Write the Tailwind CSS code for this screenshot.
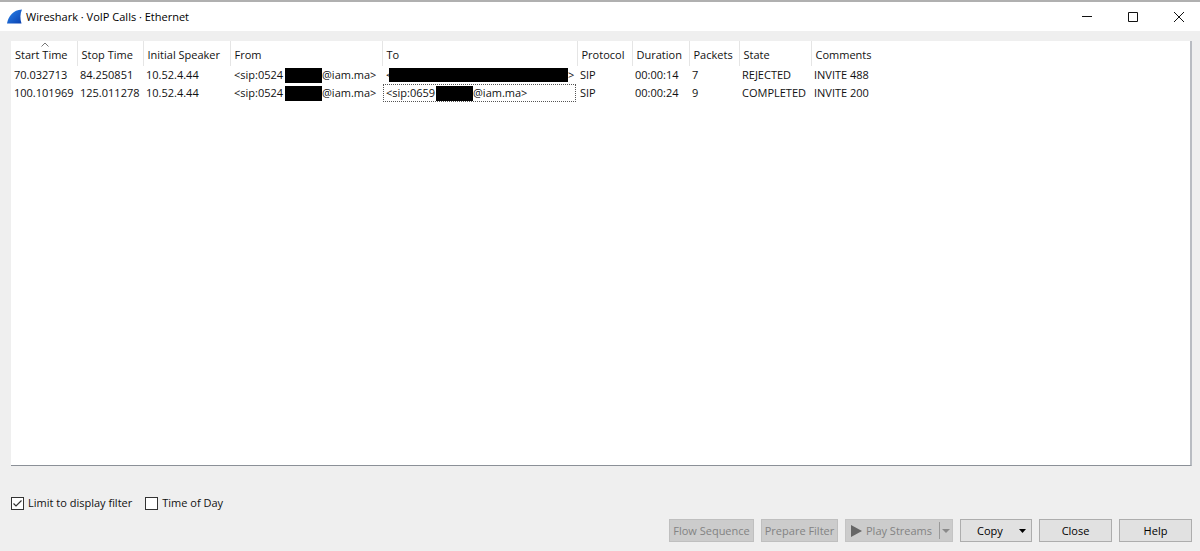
<!DOCTYPE html>
<html lang="en">
<head>
  <meta charset="UTF-8" />
  <meta name="viewport" content="width=device-width, initial-scale=1.0"/>
  <title>Wireshark · VoIP Calls · Ethernet</title>
  <script src="https://cdn.jsdelivr.net/npm/@tailwindcss/browser@4"></script>
</head>
<body class="min-h-screen flex flex-col bg-[#efefef] text-[#111] text-[11px] leading-[18px] font-['Open_Sans','Noto_Sans',sans-serif]">

  <!-- Title bar -->
  <header class="flex items-center h-[31px] pl-[7px] pr-4 bg-white border-t-2 border-[#b0b0b0] text-black">
    <svg class="w-[15px] h-[15px] mr-1" viewBox="0 0 15 15">
      <defs>
        <linearGradient id="fin" x1="0" y1="0" x2="1" y2="1">
          <stop offset="0" stop-color="#2a86ee"/>
          <stop offset="1" stop-color="#0a3fae"/>
        </linearGradient>
      </defs>
      <path d="M0 14.500C1.500 7 6 1 15 0.500C13 4.500 13 10 14.500 14.500Z" fill="url(#fin)"/>
    </svg>
    <h1>Wireshark · VoIP Calls · Ethernet</h1>
    <div class="ml-auto flex gap-9">
      <button aria-label="Minimize"><svg class="w-[10px] h-[10px]" viewBox="0 0 10 10" stroke="#111" fill="none"><path d="M0 4.500H10"/></svg></button>
      <button aria-label="Maximize"><svg class="w-[10px] h-[10px]" viewBox="0 0 10 10" stroke="#111" fill="none"><path d="M.5 .5H9.500V9.500H.5Z"/></svg></button>
      <button aria-label="Close window"><svg class="w-[10px] h-[10px]" viewBox="0 0 10 10" stroke="#111" fill="none"><path d="M0 0L10 10M10 0L0 10"/></svg></button>
    </div>
  </header>

  <main class="flex-1 flex flex-col pl-[11px] pt-[10px] pb-[9px] pr-[8px]">

    <!-- Call list -->
    <div class="flex-1 bg-white border-r-2 border-b border-r-[#b9bcc2] border-b-[#8b9097]">
      <table class="w-full table-fixed text-left whitespace-nowrap">
        <colgroup>
          <col class="w-[66px]"><col class="w-[66px]"><col class="w-[87px]"><col class="w-[152px]"><col class="w-[195px]">
          <col class="w-[55px]"><col class="w-[57px]"><col class="w-[50px]"><col class="w-[72px]"><col>
        </colgroup>
        <thead>
          <tr class="h-[25px] [&>th]:font-normal [&>th]:pl-1 [&>th]:pt-[2px] [&>th]:border-r [&>th]:border-[#e5e5e5] [&>th:last-child]:border-0">
            <th class="relative">Start Time
              <svg class="absolute top-[1px] left-[30px] w-[8px] h-[5px]" viewBox="0 0 8 5" fill="none" stroke="#777"><path d="M.5 4.500L4 1L7.500 4.500"/></svg>
            </th>
            <th>Stop Time</th>
            <th>Initial Speaker</th>
            <th>From</th>
            <th>To</th>
            <th>Protocol</th>
            <th>Duration</th>
            <th>Packets</th>
            <th>State</th>
            <th>Comments</th>
          </tr>
        </thead>
        <tbody class="[&_td]:pl-[3px]">
          <tr class="h-[18px]">
            <td>70.032713</td>
            <td>84.250851</td>
            <td>10.52.4.44</td>
            <td><div class="flex items-center pl-[1px]"><span class="w-[51px]">&lt;sip:0524</span><span class="w-[37px] h-[15px] bg-black"></span>@iam.ma&gt;</div></td>
            <td><div class="flex items-center pl-[1px]"><span class="w-[3px]">&lt;</span><span class="relative w-[179px] h-[14px] bg-black"></span><span class="w-[6px]">&gt;</span></div></td>
            <td>SIP</td>
            <td>00:00:14</td>
            <td>7</td>
            <td>REJECTED</td>
            <td>INVITE 488</td>
          </tr>
          <tr class="h-[18px]">
            <td>100.101969</td>
            <td>125.011278</td>
            <td>10.52.4.44</td>
            <td><div class="flex items-center pl-[1px]"><span class="w-[51px]">&lt;sip:0524</span><span class="w-[37px] h-[15px] bg-black"></span>@iam.ma&gt;</div></td>
            <td><div class="flex items-center pl-[3px] -ml-[2px] mr-[1px] outline outline-dotted outline-[#555] -outline-offset-1"><span class="w-[50px]">&lt;sip:0659</span><span class="w-[37px] h-[15px] bg-black"></span>@iam.ma&gt;</div></td>
            <td>SIP</td>
            <td>00:00:24</td>
            <td>9</td>
            <td>COMPLETED</td>
            <td>INVITE 200</td>
          </tr>
        </tbody>
      </table>
    </div>

    <!-- Filter options -->
    <div class="flex items-center gap-[13px] mt-[28px] mb-[1px] h-[18px]">
      <label class="flex items-center gap-1">
        <span class="relative flex">
          <input type="checkbox" checked class="peer appearance-none w-[13px] h-[13px] bg-white border border-[#333]">
          <svg class="absolute inset-0 w-[13px] h-[13px] pointer-events-none hidden peer-checked:block" viewBox="0 0 13 13" fill="none" stroke="#333" stroke-width="1.2"><path d="M2.500 6.500L5 9L10.500 3.500"/></svg>
        </span>
        Limit to display filter
      </label>
      <label class="flex items-center gap-1">
        <input type="checkbox" class="appearance-none w-[13px] h-[13px] bg-white border border-[#333]">
        Time of Day
      </label>
    </div>

    <!-- Buttons -->
    <div class="flex justify-end gap-[7px] mt-[6px] whitespace-nowrap">
      <button disabled class="w-[85px] h-[23px] bg-[#cccccc] border border-[#bfbfbf] text-[#838383]">Flow Sequence</button>
      <button disabled class="w-[77px] h-[23px] bg-[#cccccc] border border-[#bfbfbf] text-[#838383]">Prepare Filter</button>
      <button disabled class="w-[108px] h-[23px] flex items-center bg-[#cccccc] border border-[#c4c4c4] text-[#838383] pl-[5px]">
        <svg class="w-[11px] h-[12px] mr-1" viewBox="0 0 11 12"><path d="M0 0L11 6L0 12Z" fill="#666"/></svg>
        Play Streams
        <span class="ml-auto w-[13px] h-[17px] flex items-center justify-center border-l border-[#999]"><svg class="w-[8px] h-[4px]" viewBox="0 0 8 4"><path d="M0 0H8L4 4Z" fill="#8a8a8a"/></svg></span>
      </button>
      <button class="w-[72px] h-[23px] flex items-center bg-[#e1e1e1] border border-[#adadad] text-black pl-4 pr-[5px]">
        Copy
        <svg class="ml-auto w-[7px] h-[4px]" viewBox="0 0 7 4"><path d="M0 0H7L3.500 4Z" fill="#000"/></svg>
      </button>
      <button class="w-[73px] h-[23px] bg-[#e1e1e1] border border-[#adadad] text-black">Close</button>
      <button class="w-[73px] h-[23px] bg-[#e1e1e1] border border-[#adadad] text-black">Help</button>
    </div>
  </main>

</body>
</html>
